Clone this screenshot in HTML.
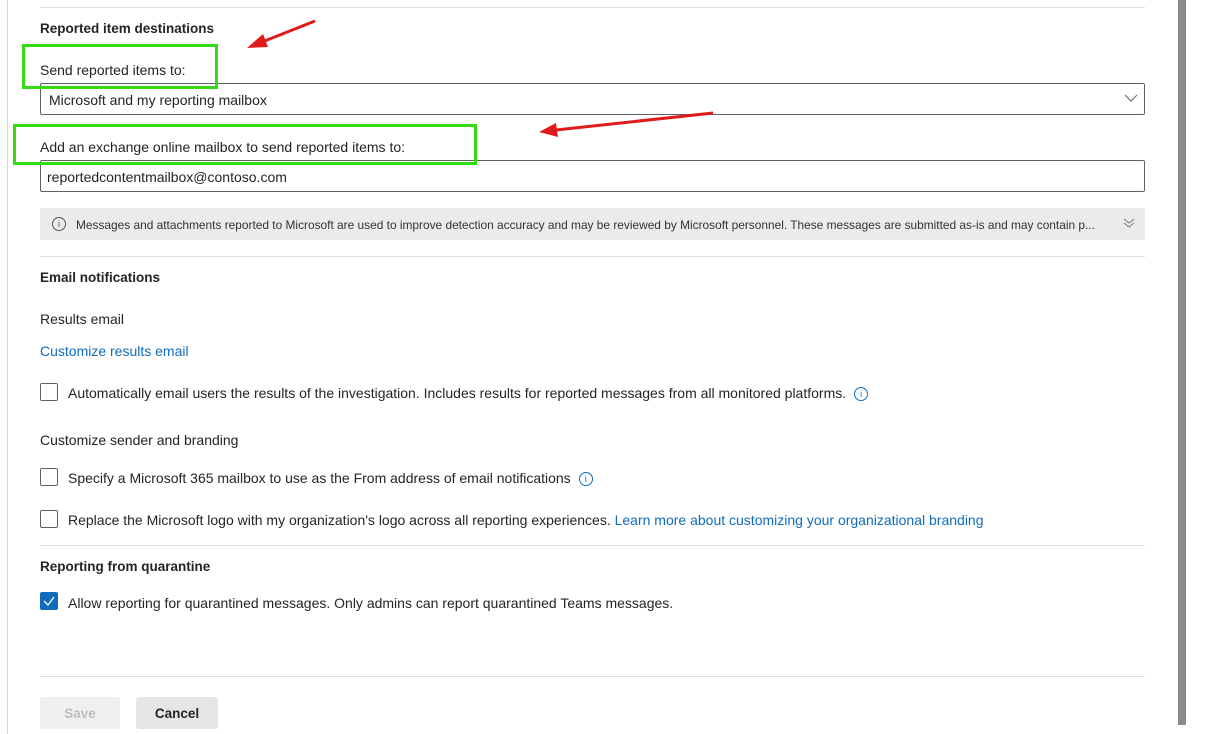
<!DOCTYPE html>
<html><head><style>
body{margin:0;width:1208px;height:734px;background:#fff;font-family:"Liberation Sans",sans-serif;color:#242424;position:relative;overflow:hidden}
.a{position:absolute}
.h{font-weight:bold;font-size:13.5px}
.t{font-size:14px}
.box{position:absolute;border:1px solid #616161;border-radius:2px;background:#fff}
.cb{position:absolute;width:18px;height:18px;border:1px solid #616161;border-radius:2px;box-sizing:border-box}
.hr{position:absolute;left:40px;width:1105px;height:1px;background:#e0e0e0}
.info{display:inline-block;width:12px;height:12px;border:1px solid #0f6cbd;border-radius:50%;color:#0f6cbd;font-size:9px;text-align:center;line-height:12px;vertical-align:1px;margin-left:8px}
a{color:#0f6cbd;text-decoration:none}
</style></head><body>
<div class="a" style="left:7px;top:0;width:1px;height:734px;background:#d6d6d6"></div>
<div class="a" style="left:1178px;top:0;width:8px;height:725px;background:#8a8a8a"></div>
<div class="hr" style="top:7px"></div>
<div class="a h" style="left:40px;top:21px">Reported item destinations</div>
<div class="a t" style="left:40px;top:62px">Send reported items to:</div>
<div class="box" style="left:40px;top:83px;width:1103px;height:30px"></div>
<div class="a t" style="left:49px;top:92px">Microsoft and my reporting mailbox</div>
<svg class="a" style="left:1124px;top:93px" width="14" height="10"><path d="M1 2 L7 8 L13 2" fill="none" stroke="#616161" stroke-width="1"/></svg>
<div class="a t" style="left:40px;top:139px">Add an exchange online mailbox to send reported items to:</div>
<div class="box" style="left:40px;top:160px;width:1103px;height:30px"></div>
<div class="a t" style="left:47px;top:169px">reportedcontentmailbox@contoso.com</div>
<div class="a" style="left:40px;top:208px;width:1105px;height:32px;background:#ebebeb"></div>
<div class="a" style="left:52px;top:217px;width:12px;height:12px;border:1px solid #555;border-radius:50%;font-size:9px;text-align:center;line-height:12px;color:#555">i</div>
<div class="a" style="left:76px;top:218px;font-size:11.9px;color:#333;white-space:nowrap">Messages and attachments reported to Microsoft are used to improve detection accuracy and may be reviewed by Microsoft personnel. These messages are submitted as-is and may contain p...</div>
<svg class="a" style="left:1122px;top:217px" width="14" height="12"><path d="M2 2 L7 6 L12 2 M2 6 L7 10 L12 6" fill="none" stroke="#777" stroke-width="1"/></svg>
<div class="hr" style="top:256px"></div>
<div class="a h" style="left:40px;top:270px">Email notifications</div>
<div class="a t" style="left:40px;top:311px">Results email</div>
<div class="a t" style="left:40px;top:343px"><a>Customize results email</a></div>
<div class="cb" style="left:40px;top:383px"></div>
<div class="a t" style="left:68px;top:385px">Automatically email users the results of the investigation. Includes results for reported messages from all monitored platforms.<span class="info">i</span></div>
<div class="a t" style="left:40px;top:432px">Customize sender and branding</div>
<div class="cb" style="left:40px;top:468px"></div>
<div class="a t" style="left:68px;top:470px">Specify a Microsoft 365 mailbox to use as the From address of email notifications<span class="info">i</span></div>
<div class="cb" style="left:40px;top:510px"></div>
<div class="a t" style="left:68px;top:512px">Replace the Microsoft logo with my organization's logo across all reporting experiences. <a>Learn more about customizing your organizational branding</a></div>
<div class="hr" style="top:545px"></div>
<div class="a h" style="left:40px;top:559px">Reporting from quarantine</div>
<div class="cb" style="left:40px;top:592px;background:#0f6cbd;border-color:#0f6cbd"><svg width="18" height="18" style="position:absolute;left:-1px;top:-1px"><path d="M4 9 L8 13 L14 5" fill="none" stroke="#fff" stroke-width="1.3"/></svg></div>
<div class="a t" style="left:68px;top:595px">Allow reporting for quarantined messages. Only admins can report quarantined Teams messages.</div>
<div class="hr" style="top:676px"></div>
<div class="a" style="left:40px;top:697px;width:80px;height:32px;background:#f0f0f0;border-radius:3px;color:#bdbdbd;font-weight:bold;font-size:13.5px;text-align:center;line-height:33px">Save</div>
<div class="a" style="left:136px;top:697px;width:82px;height:32px;background:#e6e6e6;border-radius:3px;font-weight:bold;font-size:13.5px;text-align:center;line-height:33px">Cancel</div>
<div class="a" style="left:22px;top:44px;width:190px;height:39px;border:3px solid #33dd11"></div>
<div class="a" style="left:13px;top:124px;width:458px;height:35px;border:3px solid #33dd11"></div>
<svg class="a" style="left:0;top:0" width="1208" height="734">
<line x1="315" y1="21" x2="262" y2="42" stroke="#e01b1b" stroke-width="3"/>
<polygon points="247,48 263,34 268,47" fill="#e01b1b"/>
<line x1="713" y1="113" x2="556" y2="130" stroke="#e01b1b" stroke-width="3"/>
<polygon points="539,132 556,123 558,137" fill="#e01b1b"/>
</svg>
</body></html>
